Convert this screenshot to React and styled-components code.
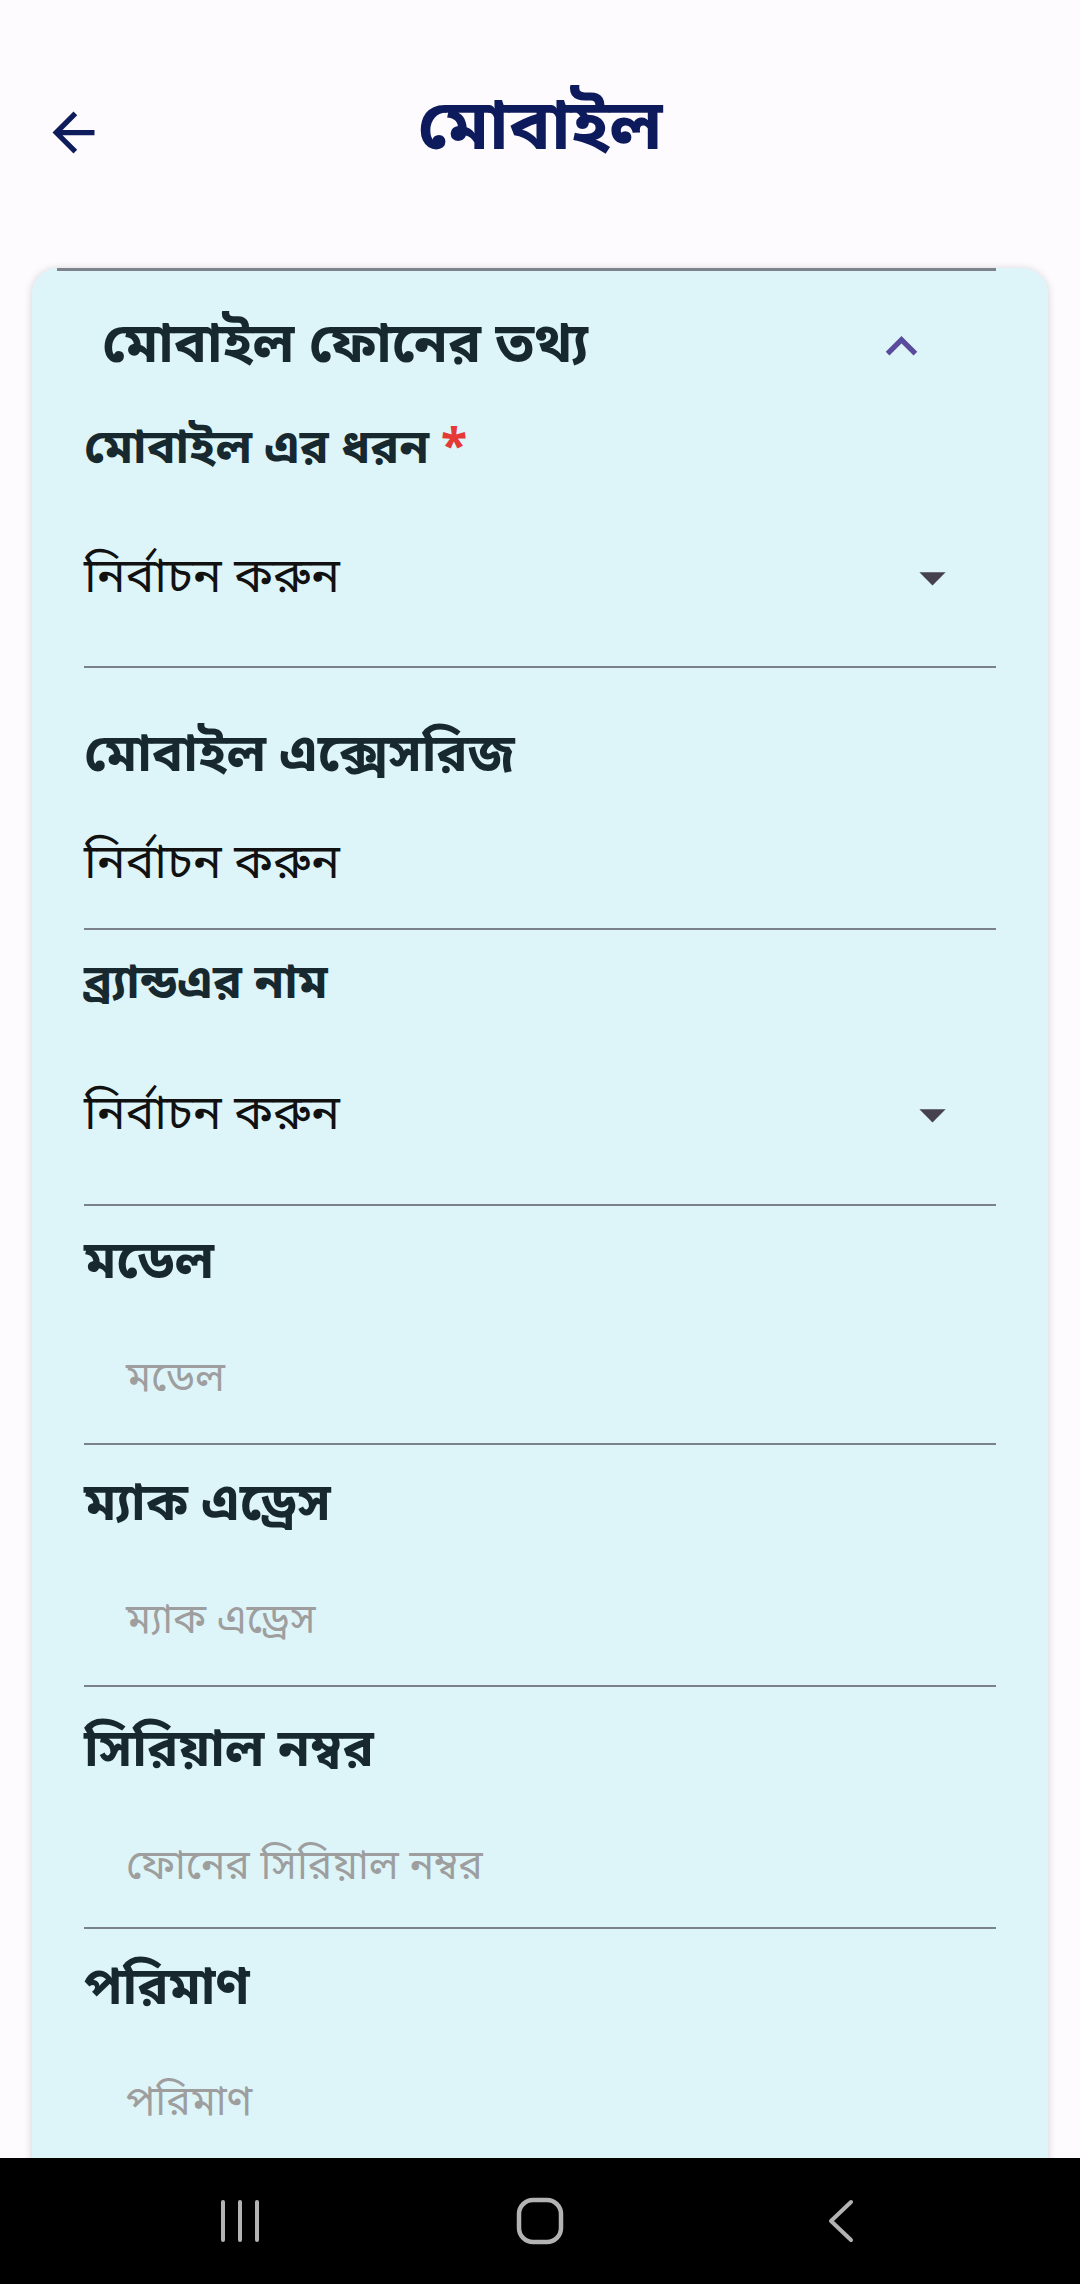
import styled, { createGlobalStyle } from "styled-components";

const GlobalStyle = createGlobalStyle`
  html, body {
    margin: 0;
    padding: 0;
    background: #fefbff;
  }
  * {
    box-sizing: border-box;
  }
`;

const bangla = `"Noto Sans Bengali", "Lohit Bengali", "FreeSans", "Noto Sans", sans-serif`;

const Screen = styled.div`
  width: 1080px;
  height: 2284px;
  display: flex;
  flex-direction: column;
  overflow: hidden;
  background: #fefbff;
  font-family: ${bangla};
`;

const AppBar = styled.header`
  display: grid;
  grid-template-columns: 1fr auto 1fr;
  align-items: center;
  height: 64px;
  margin-top: 100px;
`;

const IconButton = styled.button`
  width: 63px;
  height: 63px;
  margin-left: 42px;
  padding: 0;
  border: 0;
  background: none;
  display: flex;
  align-items: center;
  justify-content: center;
  color: #0f1c5c;
`;

const Title = styled.h1`
  margin: 0;
  font-size: 70px;
  font-weight: 700;
  line-height: 64px;
  color: #0d1a5b;
`;

const Body = styled.main`
  flex: 1;
  overflow: hidden;
  padding: 104px 32px 0;
`;

const Card = styled.section`
  min-height: 100%;
  background: #ddf5f9;
  border-radius: 26px 26px 0 0;
  box-shadow: 0 1px 8px rgba(0, 0, 0, 0.18);
  padding-bottom: 60px;
`;

const TopRule = styled.div`
  height: 3px;
  margin: 0 52px 0 25px;
  background: #7d828b;
`;

const SectionHeader = styled.div`
  display: flex;
  align-items: center;
  justify-content: space-between;
  height: 150px;
  padding: 0 115px 0 70px;
`;

const SectionTitle = styled.h2`
  margin: 0;
  padding-top: 4px;
  font-size: 55px;
  font-weight: 700;
  line-height: 64px;
  color: #17292f;
`;

const Fields = styled.div`
  padding: 0 52px;
`;

const Field = styled.div`
  display: flex;
  flex-direction: column;
`;

const Label = styled.label`
  margin-top: ${(p) => p.$mt}px;
  line-height: 60px;
  height: 60px;
  font-size: ${(p) => (p.$small ? 48 : 52)}px;
  font-weight: 700;
  color: #17292f;
  white-space: nowrap;
`;

const Required = styled.span`
  color: #e53935;
  margin-left: 12px;
`;

const ValueRow = styled.div`
  margin-top: ${(p) => p.$mt}px;
  height: 60px;
  display: flex;
  align-items: center;
  justify-content: space-between;
  padding-left: ${(p) => (p.$placeholder ? 42 : 0)}px;
  padding-right: 32px;
  font-size: ${(p) => (p.$placeholder ? 41 : 48)}px;
  color: ${(p) => (p.$placeholder ? "#9e9e9e" : "#111111")};
  white-space: nowrap;

  svg {
    margin-top: -6px;
  }
`;

const Divider = styled.div`
  margin-top: ${(p) => p.$mt}px;
  height: 2px;
  background: #7b818b;
`;

const NavBar = styled.nav`
  height: 126px;
  flex-shrink: 0;
  background: #000;
  display: grid;
  grid-template-columns: 1fr 1fr 1fr;
  align-items: center;
  justify-items: center;
  padding: 0 90px;
`;

const ArrowBack = () => (
  <svg width="63" height="63" viewBox="0 0 24 24" fill="currentColor">
    <path d="M20 11H7.83l5.59-5.59L12 4l-8 8 8 8 1.41-1.41L7.83 13H20v-2z" />
  </svg>
);

const ExpandLess = () => (
  <svg width="63" height="63" viewBox="0 0 24 24" fill="#5a4a9d">
    <path d="M12 8l-6 6 1.41 1.41L12 10.83l4.59 4.58L18 14z" />
  </svg>
);

const DropDown = () => (
  <svg width="63" height="63" viewBox="0 0 24 24" fill="#46414f">
    <path d="M7 10l5 5 5-5z" />
  </svg>
);

const RecentsIcon = () => (
  <svg width="44" height="44" viewBox="0 0 44 44" stroke="#b3b3b3" strokeWidth="4" strokeLinecap="round">
    <line x1="5" y1="3" x2="5" y2="41" />
    <line x1="22" y1="3" x2="22" y2="41" />
    <line x1="39" y1="3" x2="39" y2="41" />
  </svg>
);

const HomeIcon = () => (
  <svg width="48" height="48" viewBox="0 0 48 48" fill="none" stroke="#b3b3b3" strokeWidth="4.5">
    <rect x="3" y="3" width="42" height="42" rx="14" />
  </svg>
);

const BackIcon = () => (
  <svg width="30" height="44" viewBox="0 0 30 44" fill="none" stroke="#b3b3b3" strokeWidth="4" strokeLinecap="round" strokeLinejoin="round">
    <path d="M26 3 L6 22 L26 41" />
  </svg>
);

const textFields = [
  { label: "মডেল", placeholder: "মডেল", spacing: [29, 55, 33] },
  { label: "ম্যাক এড্রেস", placeholder: "ম্যাক এড্রেস", spacing: [32, 55, 33] },
  { label: "সিরিয়াল নম্বর", placeholder: "ফোনের সিরিয়াল নম্বর", spacing: [36, 55, 29] },
  { label: "পরিমাণ", placeholder: "পরিমাণ", spacing: [32, 53, 33] },
];

function SelectField({ label, small, required, arrow, spacing }) {
  const [a, b, c] = spacing;
  return (
    <Field>
      <Label $mt={a} $small={small}>
        {label}
        {required && <Required>*</Required>}
      </Label>
      <ValueRow $mt={b}>
        <span>নির্বাচন করুন</span>
        {arrow && <DropDown />}
      </ValueRow>
      <Divider $mt={c} />
    </Field>
  );
}

function TextField({ label, placeholder, spacing }) {
  const [a, b, c] = spacing;
  return (
    <Field>
      <Label $mt={a}>{label}</Label>
      <ValueRow $mt={b} $placeholder>
        <span>{placeholder}</span>
      </ValueRow>
      <Divider $mt={c} />
    </Field>
  );
}

export default function App() {
  return (
    <Screen>
      <GlobalStyle />
      <AppBar>
        <IconButton aria-label="back">
          <ArrowBack />
        </IconButton>
        <Title>মোবাইল</Title>
        <span />
      </AppBar>
      <Body>
        <Card>
          <TopRule />
          <SectionHeader>
            <SectionTitle>মোবাইল ফোনের তথ্য</SectionTitle>
            <ExpandLess />
          </SectionHeader>
          <Fields>
            <SelectField label="মোবাইল এর ধরন" small required arrow spacing={[0, 69, 56]} />
            <SelectField label="মোবাইল এক্সেসরিজ" spacing={[60, 48, 32]} />
            <SelectField label="ব্র্যান্ডএর নাম" small arrow spacing={[26, 71, 57]} />
            {textFields.map((f) => (
              <TextField key={f.label} {...f} />
            ))}
          </Fields>
        </Card>
      </Body>
      <NavBar>
        <RecentsIcon />
        <HomeIcon />
        <BackIcon />
      </NavBar>
    </Screen>
  );
}
